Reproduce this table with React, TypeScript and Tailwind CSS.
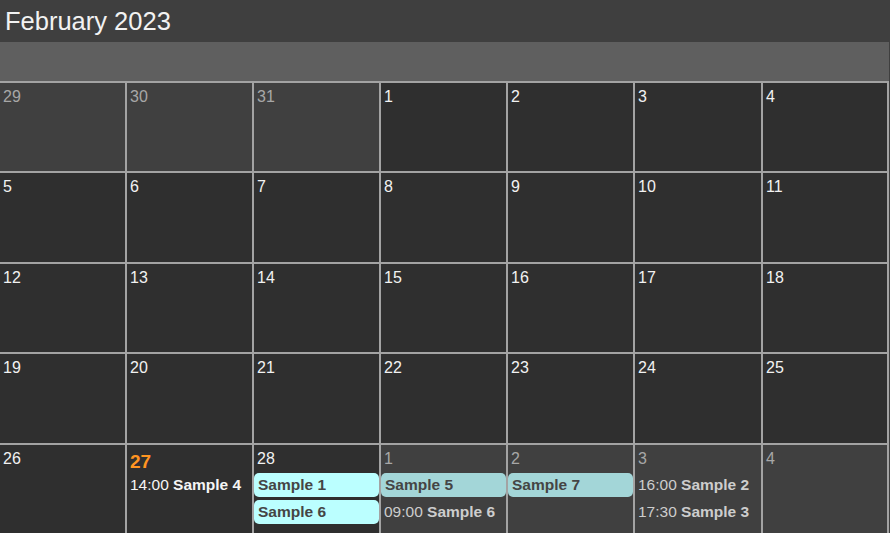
import React from "react";

type Ev = { kind: "block" | "time"; title: string; time?: string };
type Day = { n: number; other?: boolean; today?: boolean; events?: Ev[] };

const weeks: Day[][] = [
  [{ n: 29, other: true }, { n: 30, other: true }, { n: 31, other: true }, { n: 1 }, { n: 2 }, { n: 3 }, { n: 4 }],
  [{ n: 5 }, { n: 6 }, { n: 7 }, { n: 8 }, { n: 9 }, { n: 10 }, { n: 11 }],
  [{ n: 12 }, { n: 13 }, { n: 14 }, { n: 15 }, { n: 16 }, { n: 17 }, { n: 18 }],
  [{ n: 19 }, { n: 20 }, { n: 21 }, { n: 22 }, { n: 23 }, { n: 24 }, { n: 25 }],
  [
    { n: 26 },
    { n: 27, today: true, events: [{ kind: "time", time: "14:00", title: "Sample 4" }] },
    { n: 28, events: [{ kind: "block", title: "Sample 1" }, { kind: "block", title: "Sample 6" }] },
    { n: 1, other: true, events: [{ kind: "block", title: "Sample 5" }, { kind: "time", time: "09:00", title: "Sample 6" }] },
    { n: 2, other: true, events: [{ kind: "block", title: "Sample 7" }] },
    { n: 3, other: true, events: [{ kind: "time", time: "16:00", title: "Sample 2" }, { kind: "time", time: "17:30", title: "Sample 3" }] },
    { n: 4, other: true },
  ],
];

const rowClasses = ["h-[90px]", "h-[91px]", "h-[90px]", "h-[91px]", "h-[100px]"];

function Cell({ d, rowIdx }: { d: Day; rowIdx: number }) {
  return (
    <div
      className={`${rowClasses[rowIdx]} border-r-2 border-b-2 border-[#a3a3a3] overflow-hidden ${
        d.other ? "bg-[#404040]" : "bg-[#2f2f2f]"
      }`}
    >
      <div className="h-[28px] pt-[5px] pl-[3px]">
        {d.today ? (
          <span className="text-[19px] leading-[24px] font-bold text-[#ff9522] block">{d.n}</span>
        ) : (
          <span
            className={`text-[16px] leading-[18px] block ${d.other ? "text-[#a7a7a7]" : "text-[#f2f2f2]"}`}
          >
            {d.n}
          </span>
        )}
      </div>
      <div className="flex flex-col">
        {(d.events || []).map((e, i) =>
          e.kind === "block" ? (
            <div
              key={i}
              className={`h-[24px] mb-[3px] rounded-[5px] pl-[4px] text-[15.5px] leading-[24px] font-bold text-[#454545] ${
                d.other ? "bg-[#a3d6d8]" : "bg-[#bbffff]"
              }`}
            >
              {e.title}
            </div>
          ) : (
            <div
              key={i}
              className={`h-[24px] mb-[3px] pl-[3px] text-[15.5px] leading-[24px] whitespace-nowrap ${
                d.other ? "text-[#cdcdcd]" : "text-[#f5f5f5]"
              }`}
            >
              <span>{e.time}</span> <span className="font-bold">{e.title}</span>
            </div>
          )
        )}
      </div>
    </div>
  );
}

export default function App() {
  return (
    <div
      className="w-[890px] h-[533px] overflow-hidden bg-[#3f3f3f]"
      style={{ fontFamily: '"Liberation Sans", Arial, sans-serif' }}
    >
      <div className="w-[889px]">
        <div className="h-[42px] bg-[#3f3f3f] pl-[5px] flex items-center">
          <span className="text-[25.5px] leading-[30px] text-[#f2f2f2]">February 2023</span>
        </div>
        <div className="h-[39px] bg-[#5f5f5f]" />
        <div className="border-t-2 border-[#a3a3a3] grid grid-cols-[127px_127px_127px_127px_127px_128px_126px]">
          {weeks.map((w, ri) => w.map((d, ci) => <Cell key={`${ri}-${ci}`} d={d} rowIdx={ri} />))}
        </div>
      </div>
    </div>
  );
}
